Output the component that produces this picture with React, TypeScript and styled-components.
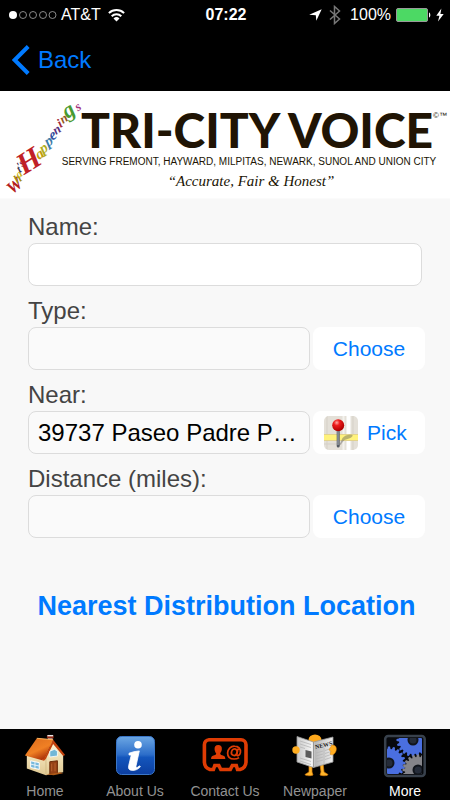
import React, { useState } from 'react';
import styled, { createGlobalStyle } from 'styled-components';

const sans = '"Liberation Sans", Arial, Helvetica, sans-serif';
const blue = '#007aff';

const GlobalStyle = createGlobalStyle`
  *, *::before, *::after { box-sizing: border-box; }
  body { margin: 0; background: #f8f8f8; font-family: ${sans}; }
  button, input { font-family: inherit; margin: 0; }
`;

const Screen = styled.div`
  display: flex;
  flex-direction: column;
  min-height: 100vh;
`;

const TopBar = styled.header`
  background: #000;
  color: #fff;
`;

const StatusBar = styled.div`
  display: grid;
  grid-template-columns: 1fr auto 1fr;
  align-items: center;
  height: 30px;
  padding: 0 6px 0 8px;
  font-size: 16px;
  line-height: 20px;
`;

const StatusGroup = styled.div<{ $end?: boolean }>`
  display: flex;
  align-items: center;
  justify-content: ${p => (p.$end ? 'flex-end' : 'flex-start')};
  gap: ${p => (p.$end ? 5 : 4)}px;
  svg { flex: none; }
`;

const Clock = styled.time`
  font-weight: 700;
`;

const NavBar = styled.nav`
  display: flex;
  align-items: center;
  height: 61px;
  padding: 0 12px 2px;
`;

const BackButton = styled.button`
  display: flex;
  align-items: center;
  gap: 8px;
  padding: 0;
  border: 0;
  background: none;
  color: ${blue};
  font-size: 24px;
  line-height: 32px;
  cursor: pointer;
`;

const Banner = styled.div`
  display: flex;
  justify-content: center;
  height: 108px;
  background: #fff;
  border-bottom: 1px solid #fbfbfb;
  color: #201404;
`;

const Masthead = styled.div`
  display: flex;
  align-items: flex-start;
`;

const Wordmark = styled.div`
  display: flex;
  flex-direction: column;
  align-items: center;
  margin-left: -22px;
  padding-top: 15px;
  white-space: nowrap;
`;

const Title = styled.h1`
  display: flex;
  margin: 0 0 0 16px;
  font-family: Lato, sans-serif;
  font-size: 48px;
  font-weight: 900;
  line-height: 48px;
`;

const Marks = styled.span`
  padding-top: 4px;
  font-family: "Liberation Sans", sans-serif;
  font-size: 8px;
  font-weight: 400;
  line-height: 12px;
`;

const Cities = styled.p`
  margin: 2px 14px 0 0;
  font-family: "Liberation Sans", sans-serif;
  font-size: 10px;
  line-height: 12px;
`;

const Motto = styled.p`
  margin: 3px 10px 0 0;
  font-family: "Liberation Serif", serif;
  font-size: 15px;
  font-style: italic;
  line-height: 20px;
`;

const Form = styled.form`
  flex: 1;
  display: flex;
  flex-direction: column;
  padding: 12px 25px 24px 28px;
`;

const Field = styled.div`
  display: flex;
  flex-direction: column;
`;

const Label = styled.label`
  padding-top: 1px;
  color: #444;
  font-size: 24px;
  line-height: 30px;
  height: 32px;
`;

const FieldRow = styled.div`
  display: flex;
  gap: 3px;
  margin-bottom: 9px;
`;

const TextBox = styled.input<{ $wide?: boolean }>`
  flex: 1;
  min-width: 0;
  height: 43px;
  margin-right: ${p => (p.$wide ? 3 : 0)}px;
  padding: 0 9px;
  border: 1px solid #dcdcdc;
  border-radius: 8px;
  background: ${p => (p.readOnly ? '#fafafa' : '#fff')};
  color: #000;
  font-size: 24px;
  text-overflow: ellipsis;
  outline: none;
`;

const SideButton = styled.button<{ $icon?: boolean }>`
  display: flex;
  flex: none;
  align-items: center;
  justify-content: ${p => (p.$icon ? 'flex-start' : 'center')};
  gap: 9px;
  width: 112px;
  height: 43px;
  padding: 0 ${p => (p.$icon ? 11 : 0)}px;
  border: 0;
  border-radius: 8px;
  background: #fff;
  color: ${blue};
  font-size: 21px;
  cursor: pointer;
`;

const SubmitButton = styled.button`
  align-self: center;
  margin-top: 41px;
  padding: 0;
  border: 0;
  background: none;
  color: ${blue};
  font-size: 27px;
  font-weight: 700;
  line-height: 36px;
  white-space: nowrap;
  cursor: pointer;
`;

const TabBar = styled.nav`
  display: grid;
  grid-template-columns: repeat(5, 1fr);
  height: 71px;
  background: #000;
`;

const Tab = styled.button<{ $active?: boolean }>`
  display: flex;
  flex-direction: column;
  align-items: center;
  gap: 5px;
  padding: 5px 0 0;
  border: 0;
  background: none;
  color: ${p => (p.$active ? '#fff' : '#929292')};
  font-size: 14px;
  line-height: 16px;
  white-space: nowrap;
  cursor: pointer;
`;

const SignalDots = () => (
  <svg width="49" height="10" viewBox="0 0 49 10" aria-hidden="true">
    <circle cx="5" cy="5" r="4" fill="#fff" />
    {[15, 25, 35, 44.5].map(x => (
      <circle key={x} cx={x} cy="5" r="3.5" fill="none" stroke="#aaa" strokeWidth=".8" />
    ))}
  </svg>
);

const WifiIcon = () => (
  <svg width="22" height="14" viewBox="-3 0 22 14" fill="none" stroke="#fff" strokeWidth="2" aria-hidden="true">
    <path d="M.9 5.1a11 11 0 0 1 15.2 0" />
    <path d="M3.7 8.2a6.8 6.8 0 0 1 9.6 0" />
    <path d="M8.5 13.4 5.5 10.4a4.3 4.3 0 0 1 6 0Z" fill="#fff" stroke="none" />
  </svg>
);

const LocationIcon = () => (
  <svg width="15" height="12" viewBox="0 0 15 12" aria-hidden="true">
    <path d="M12.7.2 7.3 11.8 6.8 6.2.2 5.7Z" fill="#fff" />
  </svg>
);

const BluetoothIcon = () => (
  <svg width="16" height="20" viewBox="0 0 16 20" fill="none" stroke="#777" strokeWidth="1.5" aria-hidden="true">
    <path d="m1 5.5 9.5 8.5-5 4.5v-17l5 4.5L1 14.5" />
  </svg>
);

const BatteryIcon = () => (
  <svg width="35" height="14" viewBox="0 0 35 14" aria-hidden="true">
    <rect x=".5" y=".5" width="31" height="13" rx="1.5" fill="#4cd964" stroke="#999" />
    <path d="M33 4.5c1.8.6 1.8 4.4 0 5Z" fill="#fff" />
  </svg>
);

const BoltIcon = () => (
  <svg width="8" height="14" viewBox="0 0 8 14" aria-hidden="true">
    <path d="M5.4.5.3 7.8h3.1L2 13.5l5.7-7.6H4.4Z" fill="#fff" />
  </svg>
);

const BackIcon = () => (
  <svg width="18" height="30" viewBox="0 0 18 30" aria-hidden="true">
    <path d="m16.2 1.5-13.5 13.5 13.5 13.5" fill="none" stroke={blue} strokeWidth="4" />
  </svg>
);

type Letter = [string, number, number, number, number, string];

const happenings: Letter[] = [
  ['W', 18, 99, -40, 17, '#b3201c'],
  ['h', 20, 91, -36, 12, '#a08a10'],
  ['a', 21, 86, -36, 11, '#c9b512'],
  ['t', 21, 81, -36, 11, '#3a3550'],
  ["'", 21, 78, -36, 11, '#42204e'],
  ['s', 24, 75, -36, 12, '#8d2d7c'],
  ['H', 34, 78, -32, 30, '#c01f28'],
  ['a', 42, 67, -34, 15, '#c0a010'],
  ['p', 46, 61, -34, 15, '#b3ae1c'],
  ['p', 51, 54, -34, 15, '#3c7da8'],
  ['e', 55, 48, -34, 15, '#3450a0'],
  ['n', 59, 42, -34, 13, '#5a307c'],
  ['i', 62, 36, -34, 13, '#a12a38'],
  ['n', 66, 31, -34, 13, '#94561c'],
  ['g', 72, 25, -34, 22, '#499a30'],
  ['s', 80, 19, -34, 13, '#a0307c'],
];

const HappeningsLogo = () => (
  <svg width="84" height="106" viewBox="0 0 84 106" aria-label="What's Happenings">
    <g fontFamily="Liberation Serif, serif" fontStyle="italic" fontWeight="700" textAnchor="middle">
      {happenings.map(([ch, x, y, turn, size, color], i) => (
        <text key={i} transform={`translate(${x} ${y}) rotate(${turn})`} fontSize={size} fill={color}>{ch}</text>
      ))}
    </g>
  </svg>
);

const MapPinIcon = () => (
  <svg width="34" height="34" viewBox="0 0 34 34" aria-hidden="true">
    <defs>
      <clipPath id="mapClip"><rect width="34" height="34" rx="5" /></clipPath>
      <radialGradient id="pinHead" cx=".38" cy=".28" r=".7">
        <stop offset="0" stopColor="#ffaaa4" />
        <stop offset=".35" stopColor="#ee1c1c" />
        <stop offset="1" stopColor="#ae0000" />
      </radialGradient>
    </defs>
    <g clipPath="url(#mapClip)">
      <rect width="34" height="34" fill="#e4e0d8" />
      <path d="M3 0v34M29 0v34M0 28h18" stroke="#d5d0c7" strokeWidth="1" />
      <path d="M19.5 0v34" stroke="#f4f2ee" strokeWidth="2" />
      <path d="M24.5 0v34" stroke="#fff" strokeWidth="4" />
      <path d="M0 21.5h34" stroke="#e3d38c" strokeWidth="7" />
      <path d="M0 21.5h34" stroke="#fff27c" strokeWidth="5" />
      <path d="m14.5 31 4-9c2-3 7-4 10-3 1 2-4 4-8 5Z" fill="#555" opacity=".4" />
      <path d="M14.2 13v17" stroke="#555b62" strokeWidth="3" strokeLinecap="round" />
      <path d="M14 14v15" stroke="#aeb5bc" strokeWidth="1" />
      <circle cx="14.2" cy="9.3" r="6" fill="url(#pinHead)" />
    </g>
  </svg>
);

const HomeIcon = () => (
  <svg width="44" height="44" viewBox="0 0 46 46" aria-hidden="true">
    <defs>
      <linearGradient id="roof" x1="0" y1="0" x2=".6" y2="1">
        <stop offset="0" stopColor="#d96a1c" />
        <stop offset=".6" stopColor="#f08024" />
        <stop offset="1" stopColor="#a82c06" />
      </linearGradient>
      <linearGradient id="wall" x1="0" y1="0" x2="0" y2="1">
        <stop offset="0" stopColor="#fff5d4" />
        <stop offset="1" stopColor="#dfc892" />
      </linearGradient>
    </defs>
    <path d="M26 4v8l5 3V4Z" fill="#b7aaa2" />
    <path d="M25 1.5h7v3h-7z" fill="#8d2712" />
    <path d="M25.5 1h6v1.5h-6z" fill="#e9e5e4" />
    <path d="m4 22 18 4 9-18 11 14v18l-18 3L4 36Z" fill="url(#wall)" />
    <path d="M24 24v18" stroke="#cdb57e" strokeWidth=".8" />
    <path d="M14.5 4.5 31.5 6 23 24.5 20 27.5 2 22.5Z" fill="url(#roof)" />
    <path d="M31.5 6 23 24l-3 3.5 2 .5 2-2 7.5-15.5L42 23l2-1Z" fill="#c2410c" />
    <path d="m14.5 4.5 17 1.5" stroke="#ffb45e" strokeWidth="1" />
    <path d="m8 28 9 2v7l-9-2Z" fill="#78b9dc" stroke="#fff" strokeWidth="1" />
    <path d="M12.5 29v7M8 31.5l9 2" stroke="#fff" strokeWidth=".8" />
    <path d="m28 18 5-2 3 2v5l-8 1Z" fill="#72b7d6" stroke="#fff" strokeWidth=".8" />
    <path d="m28 29 8-1v13l-8 1Z" fill="#954116" stroke="#6a2908" strokeWidth="1" />
    <path d="M30 31v8M33.5 30.5v8.5" stroke="#b9622d" strokeWidth="1" />
    <path d="m24 42 15-2 3 1-10 2Z" fill="#ad5817" />
  </svg>
);

const InfoIcon = () => (
  <svg width="44" height="44" viewBox="0 0 44 44" aria-hidden="true">
    <defs>
      <linearGradient id="infoBlue" x1="0" y1="0" x2="0" y2="1">
        <stop offset="0" stopColor="#6ca7e3" />
        <stop offset=".48" stopColor="#2c6dc9" />
        <stop offset=".55" stopColor="#1456bc" />
        <stop offset="1" stopColor="#0c3ea0" />
      </linearGradient>
    </defs>
    <rect x="3.5" y="2.5" width="38" height="38" rx="5" fill="url(#infoBlue)" stroke="#3a76c8" />
    <circle cx="25" cy="10.7" r="3.8" fill="#fff" />
    <path d="M16 19.2c3-1.2 6.5-2 10.3-2.3l-3.2 14.8c-.4 1.7.3 2.2 1.4 1.6l2.1-1.5.8 1c-2.6 2.7-5 3.6-7.7 3.6-3.4 0-4.8-1.6-4-4.8l2.2-9.1c.3-1.5.4-1.7-1.9-1.5Z" fill="#fff" stroke="#fff" strokeWidth=".8" />
  </svg>
);

const ContactIcon = () => (
  <svg width="48" height="44" viewBox="0 0 48 44" aria-hidden="true">
    <path d="M8 5.7h32a5 5 0 0 1 5 5V28a8 8 0 0 1-6 7.5h-2.5l-1.2-4h-4l-2 4h-9.5l-2-4h-4l-1.4 4H9A8 8 0 0 1 3.4 28V10.7a5 5 0 0 1 4.6-5Z" fill="none" stroke="#df3c04" strokeWidth="3.6" />
    <path d="M17.2 11c2.7 0 4.1 1.9 3.6 4.8-.3 1.6-.9 2.7-1.6 3.5 0 1.6 1.4 1.9 3.3 2.5 1.5.5 1.8 1.8 1.8 3.2H10.1c0-1.5.3-2.8 1.8-3.2 1.9-.6 3.3-.9 3.3-2.5-.8-.8-1.4-2-1.6-3.6-.4-2.8 1-4.7 3.6-4.7Z" fill="#df3c04" />
    <ellipse cx="33.3" cy="18.2" rx="2.8" ry="3.3" transform="rotate(20 33.3 18.2)" fill="none" stroke="#df3c04" strokeWidth="1.7" />
    <path d="m37 14.6-1.2 5.8c-.3 2.2 3 1.6 3.6-1.8.6-3.8-2.1-6.5-5.8-6.5a6.8 6.8 0 0 0-7 6.8c0 3.8 2.6 6.1 6.5 6.1 2 0 3.6-.5 5-1.4" fill="none" stroke="#df3c04" strokeWidth="1.7" />
  </svg>
);

const NewspaperIcon = () => (
  <svg width="46" height="44" viewBox="0 0 46 44" aria-hidden="true">
    <defs>
      <linearGradient id="paper" x1="0" y1="0" x2="1" y2="0">
        <stop offset="0" stopColor="#c8c8c8" />
        <stop offset=".42" stopColor="#f6f6f6" />
        <stop offset=".5" stopColor="#b8b8b8" />
        <stop offset="1" stopColor="#eee" />
      </linearGradient>
    </defs>
    <ellipse cx="23" cy="6" rx="6.5" ry="5.5" fill="#ffa91c" />
    <path d="M17 30v8l-4 2.5c0 1.5 7 1.5 8 .5l-1-3v-8M28 30l1 8-1 3c2 1 8 1 8-.5L32 38l-1-9" fill="#ffb52a" stroke="#d77b08" strokeWidth=".7" />
    <path d="M5 2.5 21.5 8 41 3v25l-19.5 5.5L5 28Z" fill="url(#paper)" stroke="#999" strokeWidth=".8" />
    <path d="M21.5 8v25.5" stroke="#999" />
    <path d="m8 7 11 3.5M8 10l11 3.5M8 13l5 1.5M8 24l11 3.5M8 27l11 3.5M24 19l7-2M24 22l7-2M24 25l7-2M24 28l7-2M33 16.5l6-2M33 19.5l6-2M33 22.5l6-2M33 25.5l6-2M32 14v16" stroke="#b5b5b5" strokeWidth=".8" />
    <path d="m13.5 16 6 1.5v7l-6-1.5Z" fill="#5c5c5c" />
    <text x="23.5" y="15" transform="rotate(-13 23.5 15)" fontFamily="Liberation Serif, serif" fontSize="6" fontWeight="700" fill="#222">NEWS</text>
    <circle cx="4" cy="16" r="3.7" fill="#ffad20" />
    <path d="M40 11c4 0 5 3 4 6s-4 5-6 3l1-3-2-1 1-2Z" fill="#ffad20" stroke="#df8208" strokeWidth=".5" />
  </svg>
);

type GearProps = { cx: number; cy: number; r: number; hole: number; color: string; teeth: number };

const Gear = ({ cx, cy, r, hole, color, teeth }: GearProps) => (
  <g transform={`translate(${cx} ${cy})`}>
    {Array.from({ length: teeth }, (_, i) => (
      <path key={i} fill={color} d={`M-1.8 ${-r + 1}L-1 ${-r - 2.5}H1L1.8 ${-r + 1}Z`} transform={`rotate(${(360 / teeth) * i})`} />
    ))}
    <circle r={r} fill={color} />
    <circle r={hole} fill="#11151c" />
    <circle r={hole - 2} fill="#252c39" />
  </g>
);

const GearsIcon = () => (
  <svg width="44" height="44" viewBox="0 0 44 44" aria-hidden="true">
    <defs>
      <clipPath id="gearsClip"><rect x="4" y="4" width="35" height="36" rx="1" /></clipPath>
    </defs>
    <rect x="2.2" y="2" width="39.5" height="40" rx="3" fill="#07090d" stroke="#38414c" strokeWidth="2.5" />
    <g clipPath="url(#gearsClip)">
      <Gear cx={30} cy={6} r={14} hole={5.5} color="#4a6fe0" teeth={20} />
      <Gear cx={6} cy={29} r={14} hole={5.5} color="#4a6fe0" teeth={20} />
      <Gear cx={35} cy={36} r={13} hole={5.5} color="#85858a" teeth={20} />
    </g>
  </svg>
);

const tabs = [
  { name: 'Home', Icon: HomeIcon },
  { name: 'About Us', Icon: InfoIcon },
  { name: 'Contact Us', Icon: ContactIcon },
  { name: 'Newpaper', Icon: NewspaperIcon },
  { name: 'More', Icon: GearsIcon },
];

export default function App() {
  const [name, setName] = useState('');
  const [active, setActive] = useState('More');

  return (
    <Screen>
      <GlobalStyle />
      <TopBar>
        <StatusBar>
          <StatusGroup>
            <SignalDots />
            <span>AT&amp;T</span>
            <WifiIcon />
          </StatusGroup>
          <Clock>07:22</Clock>
          <StatusGroup $end>
            <LocationIcon />
            <BluetoothIcon />
            <span>100%</span>
            <BatteryIcon />
            <BoltIcon />
          </StatusGroup>
        </StatusBar>
        <NavBar>
          <BackButton type="button"><BackIcon />Back</BackButton>
        </NavBar>
      </TopBar>
      <Banner>
        <Masthead>
          <HappeningsLogo />
          <Wordmark>
            <Title>TRI-CITY VOICE<Marks>©™</Marks></Title>
            <Cities>SERVING FREMONT, HAYWARD, MILPITAS, NEWARK, SUNOL AND UNION CITY</Cities>
            <Motto>“Accurate, Fair &amp; Honest”</Motto>
          </Wordmark>
        </Masthead>
      </Banner>
      <Form onSubmit={e => e.preventDefault()}>
        <Field>
          <Label htmlFor="name">Name:</Label>
          <FieldRow>
            <TextBox id="name" $wide value={name} onChange={e => setName(e.target.value)} />
          </FieldRow>
        </Field>
        <Field>
          <Label htmlFor="type">Type:</Label>
          <FieldRow>
            <TextBox id="type" readOnly value="" />
            <SideButton type="button">Choose</SideButton>
          </FieldRow>
        </Field>
        <Field>
          <Label htmlFor="near">Near:</Label>
          <FieldRow>
            <TextBox id="near" readOnly value="39737 Paseo Padre P…" />
            <SideButton type="button" $icon><MapPinIcon />Pick</SideButton>
          </FieldRow>
        </Field>
        <Field>
          <Label htmlFor="distance">Distance (miles):</Label>
          <FieldRow>
            <TextBox id="distance" readOnly value="" />
            <SideButton type="button">Choose</SideButton>
          </FieldRow>
        </Field>
        <SubmitButton type="submit">Nearest Distribution Location</SubmitButton>
      </Form>
      <TabBar>
        {tabs.map(({ name: label, Icon }) => (
          <Tab key={label} type="button" $active={label === active} onClick={() => setActive(label)}>
            <Icon />
            {label}
          </Tab>
        ))}
      </TabBar>
    </Screen>
  );
}
